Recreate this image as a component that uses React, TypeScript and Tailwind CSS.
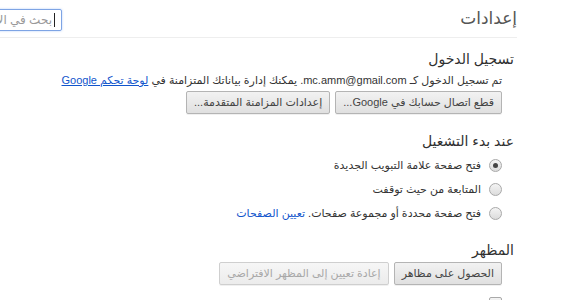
import { Search } from 'lucide-react';

function Btn({ children, disabled }: { children: React.ReactNode; disabled?: boolean }) {
  return (
    <button
      className={`h-[23px] px-[7px] rounded-[2px] border bg-gradient-to-b text-[11px] leading-none shadow-[0_1px_0_rgba(0,0,0,0.06)] ${
        disabled
          ? 'text-[#a8a8a8] border-[#cfcfcf] from-[#f6f6f6] to-[#ececec]'
          : 'text-[#444] border-[#b4b4b4] from-[#f2f2f2] to-[#e0e0e0]'
      }`}
    >
      {children}
    </button>
  );
}

function Radio({ checked, children }: { checked?: boolean; children: React.ReactNode }) {
  return (
    <div className="flex items-center gap-[8px] h-[24px]">
      <span className="w-[13px] h-[13px] rounded-full border border-[#a9a9a9] bg-gradient-to-b from-[#f4f4f4] to-[#dcdcdc] flex items-center justify-center">
        {checked && <span className="w-[5px] h-[5px] rounded-full bg-[#444]" />}
      </span>
      <span>{children}</span>
    </div>
  );
}

export default function App() {
  return (
    <div
      dir="rtl"
      className="w-[571px] h-[300px] overflow-hidden bg-white text-[11px] text-[#333]"
      style={{ fontFamily: '"Liberation Sans", "DejaVu Sans", sans-serif' }}
    >
      <div className="mr-[54px]">
        <header className="flex items-center justify-between h-[38px] border-b border-[#eeeeee] -ml-[80px]">
          <h1 className="text-[17px] text-[#555]">إعدادات</h1>
          <div className="w-[142px] h-[22px] mt-[2px] border border-[#7ea4e4] rounded-[2px] flex items-center pr-[6px] text-[#999] text-[12px] shadow-[0_0_2px_rgba(77,144,254,0.5)]">
            <span className="border-r border-[#222] h-[14px]" />
            <span className="mr-[2px]">بحث في الإعدادات</span>
            <Search className="w-0 h-0" />
          </div>
        </header>

        <section className="pt-[12px]">
          <h2 className="text-[14px] text-[#303030] leading-[18px] mr-[3px]">تسجيل الدخول</h2>
          <div className="mr-[15px] mt-[2px]">
            <p className="leading-[20px] whitespace-nowrap">
              تم تسجيل الدخول كـ{' '}
              <span dir="ltr">mc.amm@gmail.com</span>. يمكنك إدارة بياناتك المتزامنة في{' '}
              <a className="text-[#1155cc] underline">لوحة تحكم Google</a>
            </p>
            <div className="flex gap-[5px] mt-[1px]">
              <Btn>قطع اتصال حسابك في Google...</Btn>
              <Btn>إعدادات المزامنة المتقدمة...</Btn>
            </div>
          </div>
        </section>

        <section className="pt-[18px]">
          <h2 className="text-[14px] text-[#303030] leading-[18px] mr-[3px]">عند بدء التشغيل</h2>
          <div className="mr-[15px] mt-[3px]">
            <Radio checked>فتح صفحة علامة التبويب الجديدة</Radio>
            <Radio>المتابعة من حيث توقفت</Radio>
            <Radio>
              فتح صفحة محددة أو مجموعة صفحات. <a className="text-[#1155cc]">تعيين الصفحات</a>
            </Radio>
          </div>
        </section>

        <section className="pt-[16px]">
          <h2 className="text-[14px] text-[#303030] leading-[18px] mr-[3px]">المظهر</h2>
          <div className="mr-[15px] mt-[3px]">
            <div className="flex gap-[5px]">
              <Btn>الحصول على مظاهر</Btn>
              <Btn disabled>إعادة تعيين إلى المظهر الافتراضي</Btn>
            </div>
            <div className="flex items-start gap-[8px] mt-[12px]">
              <span className="w-[13px] h-[13px] border border-[#a9a9a9] rounded-[2px] bg-gradient-to-b from-[#f4f4f4] to-[#dcdcdc]" />
            </div>
          </div>
        </section>
      </div>
    </div>
  );
}
